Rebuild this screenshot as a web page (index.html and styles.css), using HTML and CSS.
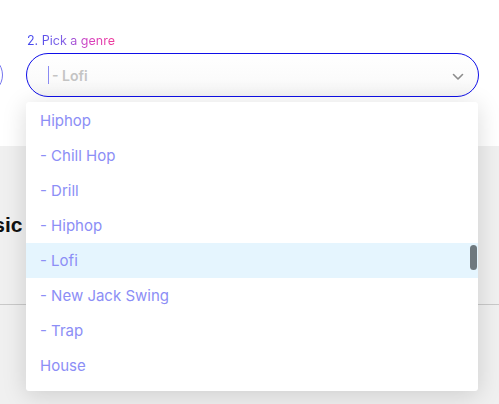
FILE: index.html
```html
<!DOCTYPE html>
<html>
<head>
<meta charset="utf-8">
<link rel="stylesheet" href="styles.css">
</head>
<body>
<div class="page">
  <section class="top">
    <div class="fields">
      <div class="field prev">
        <div class="pill small"></div>
      </div>
      <div class="field genre">
        <div class="label-row"><span class="label">2. Pick a genre</span></div>
        <div class="select">
          <span class="caret"></span>
          <span class="value">- Lofi</span>
          <svg class="chevron" width="12" height="8" viewBox="0 0 12 8"><path d="M1.5 1.5 L6 6 L10.5 1.5" fill="none" stroke="#8c8c8c" stroke-width="1.6" stroke-linecap="round" stroke-linejoin="round"/></svg>
        </div>
      </div>
    </div>
  </section>
  <section class="lower">
    <h2 class="heading">Music</h2>
    <div class="rule"></div>
  </section>
  <div class="menu">
    <div class="item">Hiphop</div>
    <div class="item">- Chill Hop</div>
    <div class="item">- Drill</div>
    <div class="item">- Hiphop</div>
    <div class="item active">- Lofi</div>
    <div class="item">- New Jack Swing</div>
    <div class="item">- Trap</div>
    <div class="item">House</div>
    <div class="thumb"></div>
  </div>
</div>
</body>
</html>
```
FILE: styles.css
```css
html, body {
  margin: 0;
  padding: 0;
}
body {
  width: 499px;
  height: 404px;
  overflow: hidden;
  background: #f0f0f0;
  font-family: Inter, "Noto Sans", sans-serif;
}
.page {
  position: relative;
  width: 499px;
  height: 404px;
}
.top {
  background: #ffffff;
  height: 146px;
  box-sizing: border-box;
  padding-top: 33px;
  overflow: hidden;
}
.fields {
  display: flex;
  gap: 23px;
  margin-left: -197px;
}
.field.prev {
  width: 200px;
  padding-top: 22px;
}
.pill.small {
  height: 38px;
  border: 1px solid #7575ee;
  border-radius: 20px;
}
.field.genre {
  width: 453px;
}
.label-row {
  height: 20px;
  padding-left: 1px;
  font-size: 12.5px;
  line-height: 15px;
}
.label {
  display: inline-block;
  vertical-align: top;
  background: linear-gradient(90deg, #3f45ee 0%, #7f5fe6 40%, #d43fc0 70%, #f03a9a 100%);
  -webkit-background-clip: text;
  background-clip: text;
  color: transparent;
}
.select {
  position: relative;
  display: flex;
  align-items: center;
  height: 44px;
  box-sizing: border-box;
  border: 1.5px solid #0f0fe8;
  border-radius: 22px;
  background: linear-gradient(180deg, #ffffff 0%, #fbfbfb 60%, #f4f4f4 100%);
  padding-left: 21px;
}
.caret {
  width: 1px;
  height: 18px;
  background: #8a8af2;
  margin-right: 3px;
}
.value {
  font-size: 14px;
  font-weight: 600;
  color: #c4c4c4;
}
.chevron {
  position: absolute;
  right: 14px;
  top: 19px;
}
.lower {
  padding-top: 67px;
}
.heading {
  margin: 0 0 0 -37px;
  font-family: "Liberation Sans", Arial, sans-serif;
  font-weight: 700;
  font-size: 21px;
  line-height: 24px;
  color: #111111;
}
.rule {
  margin-top: 67px;
  height: 1px;
  background: #c9c9c9;
}
.menu {
  position: absolute;
  left: 26px;
  top: 102px;
  width: 452px;
  box-sizing: border-box;
  padding: 1px 0 8px;
  background: #ffffff;
  border-radius: 3px;
  box-shadow: 0 4px 24px rgba(0, 0, 0, 0.15);
}
.item {
  height: 35px;
  line-height: 35px;
  padding-left: 14px;
  font-size: 15px;
  color: #8c8ef6;
}
.item.active {
  background: #e5f5fe;
}
.thumb {
  position: absolute;
  right: 1px;
  top: 143px;
  width: 7px;
  height: 25px;
  border-radius: 4px;
  background: #6e787e;
}
```
